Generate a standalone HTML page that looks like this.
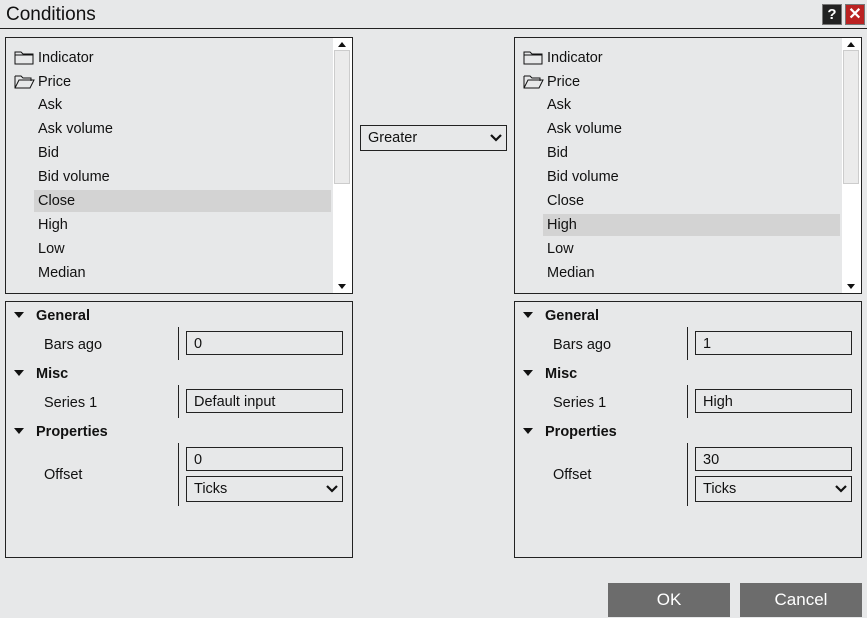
<!DOCTYPE html><html><head><style>
body{margin:0;width:867px;height:618px;background:#e7e8e9;font-family:"Liberation Sans",sans-serif;font-size:14.5px;color:#111;position:relative;overflow:hidden}
.a{position:absolute}
.box{position:absolute;border:1px solid #222;background:#e7e8e9}
.row{position:absolute;left:28px;height:22px;line-height:23px;padding-left:4px;width:293px}
.sel{background:#d3d3d3}
.sb{position:absolute;right:0;top:0;width:19px;height:100%;background:#fff}
.thumb{position:absolute;left:1px;width:16px;top:12px;height:134px;background:#ebebeb;border:1px solid #ccc;box-sizing:border-box}
.inp{position:absolute;border:1px solid #222;height:24px;box-sizing:border-box;line-height:24px;padding-left:7px;width:157px;left:180px}
.vl{position:absolute;left:172px;width:1px;background:#222}
.hd{position:absolute;left:30px;font-weight:bold;margin-top:1px}
.tri{position:absolute;left:8px;width:0;height:0;border-left:5px solid transparent;border-right:5px solid transparent;border-top:6px solid #111}
.lbl{position:absolute;margin-top:1px}
.btn{position:absolute;top:583px;width:122px;height:34px;background:#6c6c6c;color:#fff;font-size:17px;text-align:center;line-height:34px}
</style></head><body>
<div class="a" style="left:6px;top:4px;font-size:19px">Conditions</div>
<div class="a" style="left:822px;top:4px;width:18px;height:19px;background:#222;border:1px solid #777;color:#fff;font-weight:bold;text-align:center;line-height:19px;font-size:15px">?</div>
<div class="a" style="left:845px;top:4px;width:18px;height:19px;background:#b22;border:1px solid #777;color:#fff;font-weight:bold;text-align:center;line-height:19px;font-size:16px">✕</div>
<div class="a" style="left:0;top:28px;width:867px;height:1px;background:#222"></div>

<div class="box" style="left:5px;top:37px;width:346px;height:255px" id="L"></div>
<div class="box" style="left:514px;top:37px;width:346px;height:255px" id="R"></div>

<div class="a" style="left:360px;top:125px;height:24px;border:1px solid #222;line-height:25px;padding-left:7px;width:138px">Greater<svg class="a" style="left:129px;top:8px" width="12" height="9"><path d="M1 1l5 5 5-5" fill="none" stroke="#111" stroke-width="2.2"/></svg></div>

<div class="box" style="left:5px;top:301px;width:346px;height:255px" id="PL"></div>
<div class="box" style="left:514px;top:301px;width:346px;height:255px" id="PR"></div>

<div class="btn" style="left:608px">OK</div>
<div class="btn" style="left:740px">Cancel</div>

<script>
function list(id,sel){
 var b=document.getElementById(id),h='';
 var items=['Ask','Ask volume','Bid','Bid volume','Close','High','Low','Median'];
 h+='<svg class="a" style="left:8px;top:12px" width="20" height="16"><path d="M1 2h6l2 2h10v10H1z" fill="none" stroke="#111"/><path d="M1 5h18" stroke="#111"/></svg><div class="row" style="top:9px">Indicator</div>';
 h+='<svg class="a" style="left:8px;top:36px" width="22" height="16"><path d="M1 2h6l2 2h8v3M1 2v12h15l4-8H5L1 14" fill="none" stroke="#111"/></svg><div class="row" style="top:33px">Price</div>';
 items.forEach(function(t,i){h+='<div class="row'+(t==sel?' sel':'')+'" style="top:'+(56+i*24)+'px">'+t+'</div>'});
 h+='<div class="sb"><div class="thumb"></div><div class="a" style="left:5px;top:4px;border-left:4px solid transparent;border-right:4px solid transparent;border-bottom:5px solid #111"></div><div class="a" style="left:5px;bottom:4px;border-left:4px solid transparent;border-right:4px solid transparent;border-top:5px solid #111"></div></div>';
 b.innerHTML=h;
}
list('L','Close');list('R','High');
function props(id,b,s,o){
 var h='<div class="tri" style="top:10px"></div><div class="hd" style="top:5px">General</div><div class="lbl" style="left:38px;top:34px">Bars ago</div><div class="vl" style="top:25px;height:33px"></div><div class="inp" style="top:29px">'+b+'</div>';
 h+='<div class="tri" style="top:68px"></div><div class="hd" style="top:63px">Misc</div><div class="lbl" style="left:38px;top:92px">Series 1</div><div class="vl" style="top:83px;height:33px"></div><div class="inp" style="top:87px">'+s+'</div>';
 h+='<div class="tri" style="top:126px"></div><div class="hd" style="top:121px">Properties</div><div class="lbl" style="left:38px;top:164px">Offset</div><div class="vl" style="top:141px;height:63px"></div><div class="inp" style="top:145px">'+o+'</div><div class="inp" style="top:174px;height:26px;line-height:25px">Ticks<svg class="a" style="right:4px;top:8px" width="12" height="9"><path d="M1 1l5 5 5-5" fill="none" stroke="#111" stroke-width="2.2"/></svg></div>';
 document.getElementById(id).innerHTML=h;
}
props('PL','0','Default input','0');props('PR','1','High','30');
</script>
</body></html>
